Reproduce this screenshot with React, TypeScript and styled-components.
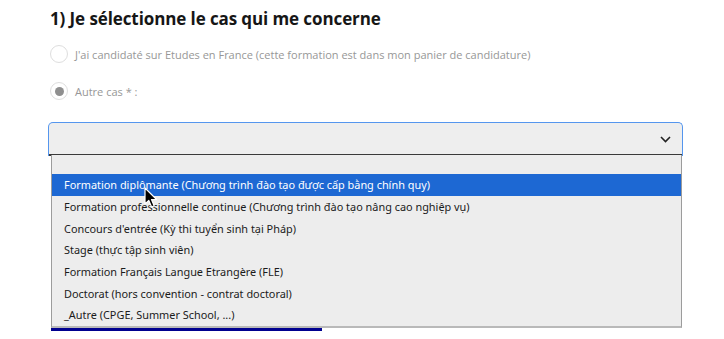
import React from "react";
import styled, { createGlobalStyle } from "styled-components";

const Global = createGlobalStyle`
  html, body { margin: 0; padding: 0; background: #ffffff; }
  body { font-family: "Open Sans", "Noto Sans", sans-serif; }
`;

const Page = styled.div`
  width: 724px;
  height: 339px;
  overflow: hidden;
  box-sizing: border-box;
  padding: 6px 41px 0 48px;
`;

const Heading = styled.h2`
  margin: 0 0 0 2px;
  font-family: "Open Sans", sans-serif;
  font-weight: 700;
  font-size: 17px;
  line-height: 26px;
  color: #161616;
  letter-spacing: -0.1px;
`;

const RadioList = styled.div`
  display: flex;
  flex-direction: column;
  gap: 19px;
  margin-top: 13px;
  padding-left: 2px;
`;

const RadioRow = styled.label`
  display: flex;
  align-items: center;
  gap: 7px;
  height: 18px;
  font-family: "Open Sans", sans-serif;
  font-size: 11px;
  color: #979797;
`;

const Circle = styled.span<{ $checked?: boolean }>`
  box-sizing: border-box;
  width: 18px;
  height: 18px;
  border-radius: 50%;
  border: 1px solid #dedede;
  background: #fff;
  display: flex;
  align-items: center;
  justify-content: center;
  &::after {
    content: "";
    display: ${(p) => (p.$checked ? "block" : "none")};
    width: 9px;
    height: 9px;
    border-radius: 50%;
    background: #8f8f8f;
  }
`;

const SelectWrap = styled.div`
  position: relative;
  margin-top: 22px;
`;

const SelectBox = styled.div`
  box-sizing: border-box;
  height: 34px;
  background: #eeeeee;
  border: 1.5px solid #5596ee;
  border-bottom: none;
  border-radius: 5px 5px 0 0;
  box-shadow: inset 0 -2px 0 #3a3a3a;
  display: flex;
  align-items: center;
  justify-content: flex-end;
  padding-right: 11px;
`;

const Chevron = styled.svg`
  width: 11px;
  height: 7px;
  display: block;
`;

const Underlay = styled.div`
  margin: 141px 0 0 3px;
  width: 271px;
  height: 34px;
  background: #00008f;
`;

const Dropdown = styled.ul`
  position: absolute;
  top: 33px;
  left: 3px;
  width: 631px;
  box-sizing: border-box;
  margin: 0;
  padding: 0;
  list-style: none;
  background: #ededed;
  border-left: 1px solid #9c9c9c;
  border-right: 1px solid #9c9c9c;
  border-bottom: 2px solid #b9b9b9;
  z-index: 2;
`;

const Option = styled.li<{ $active?: boolean; $blank?: boolean }>`
  height: ${(p) => (p.$blank ? "19px" : "21.7px")};
  display: flex;
  align-items: center;
  padding-left: 12px;
  font-family: "Noto Sans", "Open Sans", sans-serif;
  font-size: 10.9px;
  color: ${(p) => (p.$active ? "#ffffff" : "#1b1b1b")};
  background: ${(p) => (p.$active ? "#1d68d3" : "transparent")};
  white-space: nowrap;
`;

const Cursor = styled.svg`
  position: absolute;
  left: 96px;
  top: 65px;
  width: 14px;
  height: 22px;
  z-index: 3;
`;

const options = [
  "Formation diplômante (Chương trình đào tạo được cấp bằng chính quy)",
  "Formation professionnelle continue (Chương trình đào tạo nâng cao nghiệp vụ)",
  "Concours d'entrée (Kỳ thi tuyển sinh tại Pháp)",
  "Stage (thực tập sinh viên)",
  "Formation Français Langue Etrangère (FLE)",
  "Doctorat (hors convention - contrat doctoral)",
  "_Autre (CPGE, Summer School, ...)",
];

export default function App() {
  return (
    <>
      <Global />
      <Page>
        <Heading>1) Je sélectionne le cas qui me concerne</Heading>
        <RadioList>
          <RadioRow>
            <Circle />
            J'ai candidaté sur Etudes en France (cette formation est dans mon panier de candidature)
          </RadioRow>
          <RadioRow>
            <Circle $checked />
            Autre cas * :
          </RadioRow>
        </RadioList>
        <SelectWrap>
          <SelectBox>
            <Chevron viewBox="0 0 11 7">
              <path d="M1 1 L5.5 5.5 L10 1" fill="none" stroke="#222" strokeWidth="1.6" />
            </Chevron>
          </SelectBox>
          <Dropdown>
            <Option $blank />
            {options.map((o, i) => (
              <Option key={o} $active={i === 0}>
                {o}
              </Option>
            ))}
          </Dropdown>
          <Cursor viewBox="0 0 14 22">
            <path
              d="M1 1 L1 17 L4.8 13.4 L7.6 20 L10.2 18.9 L7.5 12.5 L12.6 12.5 Z"
              fill="#000"
              stroke="#fff"
              strokeWidth="1.2"
              strokeLinejoin="round"
            />
          </Cursor>
          <Underlay />
        </SelectWrap>
      </Page>
    </>
  );
}
